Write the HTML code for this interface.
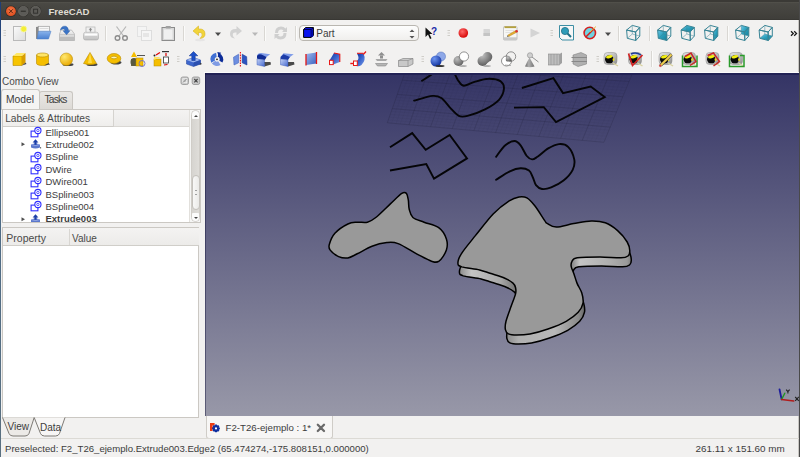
<!DOCTYPE html>
<html><head><meta charset="utf-8">
<style>
*{margin:0;padding:0;box-sizing:border-box}
html,body{width:800px;height:457px;overflow:hidden;background:#f2f1f0;font-family:"Liberation Sans",sans-serif;color:#3c3c3c}
.a{position:absolute}
.t{position:absolute;white-space:nowrap;font-size:10px;line-height:12px}
#title{left:0;top:0;width:800px;height:20px;background:linear-gradient(#3b3a36 0,#3b3a36 2px,#57564f 2px,#4a4944 3px,#3f3e3a 19px,#33322e 20px)}
.wbtn{position:absolute;top:6px;width:11px;height:11px;border-radius:50%}
#view{left:205px;top:73px;width:594px;height:343px;background:linear-gradient(#343465,#9898a8);overflow:hidden}
.ico{position:absolute}
</style></head><body>
<div class="a" id="title">
  <svg class="a" style="left:0;top:0" width="48" height="20">
  <circle cx="10.9" cy="11.2" r="5.6" fill="#2e2d2a"/>
  <circle cx="10.9" cy="11.2" r="4.9" fill="url(#gclose)"/>
  <path d="M9,9.3 L12.8,13.1 M12.8,9.3 L9,13.1" stroke="#5a2410" stroke-width="1"/>
  <circle cx="23.3" cy="11.2" r="5.6" fill="#2e2d2a"/>
  <circle cx="23.3" cy="11.2" r="4.9" fill="#5c5b57" stroke="#6d6c67" stroke-width="0.6"/>
  <rect x="20.8" y="10.6" width="5" height="1.3" fill="#33322f"/>
  <circle cx="35.6" cy="11.2" r="5.6" fill="#2e2d2a"/>
  <circle cx="35.6" cy="11.2" r="4.9" fill="#5c5b57" stroke="#6d6c67" stroke-width="0.6"/>
  <rect x="33.6" y="9.2" width="4" height="4" fill="none" stroke="#33322f" stroke-width="1"/>
  <defs><radialGradient id="gclose" cx="0.5" cy="0.4" r="0.6"><stop offset="0" stop-color="#f77a4a"/><stop offset="1" stop-color="#de4c1c"/></radialGradient></defs>
</svg>
<div class="t" style="left:48.5px;top:5.5px;font-weight:bold;color:#dfdbd2;font-size:9.6px">FreeCAD</div>
</div>
<svg class="a" style="left:0;top:0" width="800" height="72" viewBox="0 0 800 72"><defs>
<linearGradient id="gpage" x1="0" y1="0" x2="1" y2="1"><stop offset="0" stop-color="#fbfbfb"/><stop offset="1" stop-color="#dcdcdc"/></linearGradient>
<radialGradient id="gred" cx="0.4" cy="0.35" r="0.7"><stop offset="0" stop-color="#ff6a6a"/><stop offset="1" stop-color="#d40000"/></radialGradient>
<radialGradient id="gsph" cx="0.35" cy="0.3" r="0.75"><stop offset="0" stop-color="#ffe870"/><stop offset="1" stop-color="#e8a800"/></radialGradient>
<radialGradient id="gbsph" cx="0.35" cy="0.3" r="0.75"><stop offset="0" stop-color="#6d94f0"/><stop offset="1" stop-color="#0e2f9c"/></radialGradient>
<linearGradient id="gblu" x1="0" y1="0" x2="1" y2="1"><stop offset="0" stop-color="#9fb8ee"/><stop offset="1" stop-color="#3a62c0"/></linearGradient>
<linearGradient id="gteal" x1="0" y1="0" x2="1" y2="1"><stop offset="0" stop-color="#6cc8e8"/><stop offset="0.5" stop-color="#2a9fbb"/><stop offset="1" stop-color="#177f98"/></linearGradient>
<linearGradient id="gtray" x1="0" y1="0" x2="0" y2="1"><stop offset="0" stop-color="#f6f6f6"/><stop offset="1" stop-color="#c2c2c2"/></linearGradient>
<linearGradient id="gmeas" x1="0" y1="0" x2="1" y2="1"><stop offset="0" stop-color="#e6e6e6"/><stop offset="0.6" stop-color="#b5b5b5"/><stop offset="1" stop-color="#8a8a8a"/></linearGradient>
<linearGradient id="gfront" x1="0" y1="0" x2="1" y2="1"><stop offset="0" stop-color="#c4d2f4"/><stop offset="1" stop-color="#4468d0"/></linearGradient>
<linearGradient id="gloft" x1="0" y1="0" x2="1" y2="1"><stop offset="0" stop-color="#10309c"/><stop offset="0.5" stop-color="#3a64cc"/><stop offset="1" stop-color="#7a9ce8"/></linearGradient>
<linearGradient id="gopen" x1="0" y1="0" x2="0" y2="1"><stop offset="0" stop-color="#8ab4ec"/><stop offset="1" stop-color="#4a80d0"/></linearGradient>
<linearGradient id="gprint" x1="0" y1="0" x2="0" y2="1"><stop offset="0" stop-color="#f4f4f4"/><stop offset="1" stop-color="#bcbcbc"/></linearGradient>
<radialGradient id="ggry" cx="0.35" cy="0.3" r="0.8"><stop offset="0" stop-color="#bdbdbd"/><stop offset="1" stop-color="#5a5a5a"/></radialGradient>
<linearGradient id="gcone" x1="0" y1="0" x2="1" y2="0"><stop offset="0" stop-color="#6a6a6a"/><stop offset="0.4" stop-color="#b0b0b0"/><stop offset="1" stop-color="#707070"/></linearGradient>
<radialGradient id="ggryU" gradientUnits="userSpaceOnUse" cx="482" cy="55" r="12"><stop offset="0" stop-color="#c4c4c4"/><stop offset="1" stop-color="#555"/></radialGradient>
<linearGradient id="gyel" x1="0" y1="0" x2="0" y2="1"><stop offset="0" stop-color="#ffe566"/><stop offset="1" stop-color="#e8a800"/></linearGradient>
</defs><rect x="3.5" y="30.0" width="2.5" height="1" fill="#cfcdc8"/><rect x="3.5" y="32.5" width="2.5" height="1" fill="#cfcdc8"/><rect x="3.5" y="35.0" width="2.5" height="1" fill="#cfcdc8"/><rect x="13.5" y="26.5" width="12" height="14" fill="url(#gpage)" stroke="#b9b9b9"/><circle cx="23.7" cy="29" r="3" fill="#f4ee35" stroke="#f7f7a0" stroke-width="0.8"/><path d="M36,27 L38.5,26.5 L38.5,38.5 L36,39Z" fill="#8a8a8a"/><rect x="38.5" y="26.3" width="11" height="5.5" fill="#f7f7f7" stroke="#9c9c9c" stroke-width="0.7"/><rect x="39.5" y="28" width="9" height="0.6" fill="#c8c8c8"/><path d="M38.5,31.2 L51,31.2 L48.5,39 L37,39Z" fill="url(#gopen)" stroke="#4a7cc4" stroke-width="0.5"/><path d="M61,30 L71.5,30 L74.5,34 L74.5,40.5 L59.5,40.5 L59.5,34Z" fill="url(#gtray)" stroke="#a5a5a5" stroke-width="0.6"/><rect x="60" y="34" width="14" height="0.8" fill="#c4c4c4"/><rect x="60" y="37" width="14" height="3" fill="#bdbdbd"/><path d="M60.3,30.2 Q61.5,25.3 65.8,26.3 Q68.3,27.2 68.5,30.7 L70,30.7 L66.6,34.8 L63,30.7 L65,30.7 Q64.8,29.2 63.6,28.9 Q62,28.8 60.3,30.2Z" fill="#3b74c6" stroke="#2a5aa0" stroke-width="0.4"/><rect x="86" y="27" width="9" height="5.5" fill="#f0f0f0" stroke="#b4b4b4" stroke-width="0.7"/><path d="M90.5,27.8 L92.3,29.8 L91.2,29.8 L91.2,31.5 L89.8,31.5 L89.8,29.8 L88.7,29.8Z" fill="#8a8a8a"/><rect x="83.5" y="32.3" width="15" height="7.7" rx="2" fill="url(#gprint)" stroke="#a9a9a9" stroke-width="0.6"/><rect x="85" y="34" width="12" height="1.5" fill="#fdfdfd"/><rect x="84.5" y="36.5" width="13" height="0.8" fill="#c0c0c0"/><rect x="105" y="26" width="1" height="15" fill="#d9d7d3"/><rect x="106" y="26" width="1" height="15" fill="#fbfbfa"/><g stroke="#8d8d8d" fill="none"><path d="M116.5,26.5 L123.5,36" stroke-width="1.2" stroke="#b5b5b5"/><path d="M126,26.5 L119,36" stroke-width="1.2" stroke="#b5b5b5"/><circle cx="117.5" cy="38" r="2.3" stroke-width="1.4"/><circle cx="125" cy="38" r="2.3" stroke-width="1.4"/></g><rect x="137.5" y="26.5" width="9" height="10" fill="#f4f4f4" stroke="#dedede" stroke-width="0.8"/><rect x="141.5" y="30.5" width="10" height="10" fill="#f6f6f6" stroke="#d8d8d8" stroke-width="0.8"/><rect x="143" y="33" width="6" height="4" fill="#e6e6e6"/><rect x="162" y="27.5" width="12.5" height="13" fill="#d8d8d8" stroke="#8b8b8b" stroke-width="1"/><rect x="164" y="29.5" width="8.5" height="9.5" fill="#f0f0f0"/><rect x="165.5" y="26" width="5.5" height="2.5" rx="1" fill="#a0a0a0"/><rect x="183" y="26" width="1" height="15" fill="#d9d7d3"/><rect x="184" y="26" width="1" height="15" fill="#fbfbfa"/><path d="M193,31 L198.5,26 L198.5,29 Q205,28.5 205,34 Q205,38 200,38.5 Q203,36 202,33.5 Q201,32 198.5,32.5 L198.5,35.5Z" fill="#f2d43a" stroke="#d8b520" stroke-width="0.6"/><ellipse cx="200" cy="40" rx="5" ry="1.2" fill="#ddd" opacity="0.6"/><path d="M215,32.5 L221,32.5 L218,36Z" fill="#4a4a4a"/><path d="M242,31 L236.5,26 L236.5,29 Q230,28.5 230,34 Q230,38 235,38.5 Q232,36 233,33.5 Q234,32 236.5,32.5 L236.5,35.5Z" fill="#d2d2d2"/><path d="M252,32.5 L258,32.5 L255,36Z" fill="#b8b8b8"/><rect x="264" y="26" width="1" height="15" fill="#d9d7d3"/><rect x="265" y="26" width="1" height="15" fill="#fbfbfa"/><path d="M275,33 Q275,26.5 281,26.5 Q284,26.5 285.5,28.5 L287,27 L287,32 L282,32 L283.5,30.5 Q282.5,29.5 281,29.5 Q278,29.5 278,33Z" fill="#cfcfcf"/><path d="M286.5,33 Q286.5,39.5 280.5,39.5 Q277.5,39.5 276,37.5 L274.5,39 L274.5,34 L279.5,34 L278,35.5 Q279,36.5 280.5,36.5 Q283.5,36.5 283.5,33Z" fill="#cfcfcf"/><rect x="295" y="26" width="1" height="15" fill="#d9d7d3"/><rect x="296" y="26" width="1" height="15" fill="#fbfbfa"/><path d="M425.5,27.5 L425.5,37 L428,34.5 L430,39 L431.5,38.3 L429.5,34 L432.5,34Z" fill="#111"/><text x="431" y="35" font-family="Liberation Sans" font-weight="bold" font-size="10" fill="#1a2aa8">?</text><rect x="447.5" y="30.0" width="2.5" height="1" fill="#cfcdc8"/><rect x="447.5" y="32.5" width="2.5" height="1" fill="#cfcdc8"/><rect x="447.5" y="35.0" width="2.5" height="1" fill="#cfcdc8"/><circle cx="463.3" cy="33" r="4.8" fill="url(#gred)"/><rect x="483.5" y="29" width="6.5" height="7" rx="0.5" fill="#d6d6d6"/><rect x="483.5" y="33" width="6.5" height="3" fill="#c4c4c4"/><rect x="503.5" y="26.5" width="13.5" height="13.5" rx="1" fill="#f7f7f5" stroke="#b0b0b0" stroke-width="0.7"/><rect x="504.5" y="26.3" width="11.5" height="1.8" fill="#b4a03c"/><rect x="503.5" y="37.3" width="13.5" height="2.7" fill="#c8c8c8"/><path d="M505.5,30.5 L514,30.5 M505.5,32.5 L512,32.5" stroke="#d8d8d8" stroke-width="0.7"/><path d="M507.6,35.2 L515.5,30.6 L516.8,32.2 L508.8,36.6Z" fill="#e4ae30" stroke="#a8781c" stroke-width="0.4"/><path d="M507.6,35.2 L507,36.9 L508.8,36.6Z" fill="#555"/><circle cx="516.6" cy="31.2" r="1.3" fill="#d83030"/><path d="M530.5,28.5 L540,33 L530.5,37.5Z" fill="#d4d4d4"/><rect x="550.5" y="30.0" width="2.5" height="1" fill="#cfcdc8"/><rect x="550.5" y="32.5" width="2.5" height="1" fill="#cfcdc8"/><rect x="550.5" y="35.0" width="2.5" height="1" fill="#cfcdc8"/><path d="M559.5,25.5 L573.5,25.5 L573.5,40 L562,40 L559.5,37.5Z" fill="#f7f7f7" stroke="#3d8ea3" stroke-width="1"/><circle cx="565" cy="31" r="3.6" fill="#2f9cb8" stroke="#1e6f86" stroke-width="0.8"/><path d="M567.5,33.5 L571,37" stroke="#1e6f86" stroke-width="2"/><circle cx="589.8" cy="33" r="5.7" fill="#6fd3e0" stroke="#d42020" stroke-width="1.6"/><path d="M585.8,37 L593.8,29" stroke="#d42020" stroke-width="1.6"/><path d="M590,32 L596,26.5" stroke="#e8c040" stroke-width="1"/><path d="M605,32.5 L611,32.5 L608,36Z" fill="#4a4a4a"/><rect x="618" y="26" width="1" height="15" fill="#d9d7d3"/><rect x="619" y="26" width="1" height="15" fill="#fbfbfa"/><g transform="translate(626,25)"><path d="M0.6,5.0 L9.6,7.0 L9.8,15.5 L1.3,13.3Z M0.6,5.0 L6.3,0.4 L13.8,2.4 L9.6,7.0Z M9.6,7.0 L13.8,2.4 L13.8,11.1 L9.8,15.5Z" fill="none" stroke="#3a8596" stroke-width="1"/><path d="M6.3,0.4 L6.3,9.0 M6.3,9.0 L13.8,11.1 M6.3,9.0 L1.3,13.3" fill="none" stroke="#3a8596" stroke-width="0.6" opacity="0.8"/></g><rect x="649" y="26" width="1" height="15" fill="#d9d7d3"/><rect x="650" y="26" width="1" height="15" fill="#fbfbfa"/><g transform="translate(657,25)"><path d="M0.6,5.0 L9.6,7.0 L9.8,15.5 L1.3,13.3Z" fill="url(#gteal)"/><path d="M0.6,5.0 L9.6,7.0 L9.8,15.5 L1.3,13.3Z M0.6,5.0 L6.3,0.4 L13.8,2.4 L9.6,7.0Z M9.6,7.0 L13.8,2.4 L13.8,11.1 L9.8,15.5Z" fill="none" stroke="#3a8596" stroke-width="1"/><path d="M6.3,0.4 L6.3,9.0 M6.3,9.0 L13.8,11.1 M6.3,9.0 L1.3,13.3" fill="none" stroke="#3a8596" stroke-width="0.6" opacity="0.8"/></g><g transform="translate(680.5,25)"><path d="M0.6,5.0 L6.3,0.4 L13.8,2.4 L9.6,7.0Z" fill="url(#gteal)"/><path d="M0.6,5.0 L9.6,7.0 L9.8,15.5 L1.3,13.3Z M0.6,5.0 L6.3,0.4 L13.8,2.4 L9.6,7.0Z M9.6,7.0 L13.8,2.4 L13.8,11.1 L9.8,15.5Z" fill="none" stroke="#3a8596" stroke-width="1"/><path d="M6.3,0.4 L6.3,9.0 M6.3,9.0 L13.8,11.1 M6.3,9.0 L1.3,13.3" fill="none" stroke="#3a8596" stroke-width="0.6" opacity="0.8"/></g><g transform="translate(704,25)"><path d="M9.6,7.0 L13.8,2.4 L13.8,11.1 L9.8,15.5Z" fill="url(#gteal)"/><path d="M0.6,5.0 L9.6,7.0 L9.8,15.5 L1.3,13.3Z M0.6,5.0 L6.3,0.4 L13.8,2.4 L9.6,7.0Z M9.6,7.0 L13.8,2.4 L13.8,11.1 L9.8,15.5Z" fill="none" stroke="#3a8596" stroke-width="1"/><path d="M6.3,0.4 L6.3,9.0 M6.3,9.0 L13.8,11.1 M6.3,9.0 L1.3,13.3" fill="none" stroke="#3a8596" stroke-width="0.6" opacity="0.8"/></g><rect x="727" y="26" width="1" height="15" fill="#d9d7d3"/><rect x="728" y="26" width="1" height="15" fill="#fbfbfa"/><g transform="translate(735,25)"><path d="M6.3,0.4 L13.8,2.4 L13.8,11.1 L6.3,9.0Z" fill="url(#gteal)"/><path d="M0.6,5.0 L9.6,7.0 L9.8,15.5 L1.3,13.3Z M0.6,5.0 L6.3,0.4 L13.8,2.4 L9.6,7.0Z M9.6,7.0 L13.8,2.4 L13.8,11.1 L9.8,15.5Z" fill="none" stroke="#3a8596" stroke-width="1"/><path d="M6.3,0.4 L6.3,9.0 M6.3,9.0 L13.8,11.1 M6.3,9.0 L1.3,13.3" fill="none" stroke="#3a8596" stroke-width="0.6" opacity="0.8"/></g><g transform="translate(758.5,25)"><path d="M1.3,13.3 L9.8,15.5 L13.8,11.1 L6.3,9.0Z" fill="url(#gteal)"/><path d="M0.6,5.0 L9.6,7.0 L9.8,15.5 L1.3,13.3Z M0.6,5.0 L6.3,0.4 L13.8,2.4 L9.6,7.0Z M9.6,7.0 L13.8,2.4 L13.8,11.1 L9.8,15.5Z" fill="none" stroke="#3a8596" stroke-width="1"/><path d="M6.3,0.4 L6.3,9.0 M6.3,9.0 L13.8,11.1 M6.3,9.0 L1.3,13.3" fill="none" stroke="#3a8596" stroke-width="0.6" opacity="0.8"/></g><path d="M791,31.3 L793.3,33.5 L791,35.7 M794.2,31.3 L796.5,33.5 L794.2,35.7" stroke="#1a1a1a" stroke-width="1.3" fill="none"/><rect x="3.5" y="56.0" width="2.5" height="1" fill="#cfcdc8"/><rect x="3.5" y="58.5" width="2.5" height="1" fill="#cfcdc8"/><rect x="3.5" y="61.0" width="2.5" height="1" fill="#cfcdc8"/><path d="M13,56 L22,56 L22,65.5 L13,65.5Z" fill="#f7c400" stroke="#b58a00" stroke-width="0.6"/><path d="M13,56 L16.5,53 L25.5,53 L22,56Z" fill="#ffe866"/><path d="M22,56 L25.5,53 L25.5,62.5 L22,65.5Z" fill="#d99e00"/><path d="M22,65.5 L26.5,64 L25.5,62.5Z" fill="#444"/><path d="M36.5,55 L36.5,63.5 A6,2 0 0 0 48.5,63.5 L48.5,55Z" fill="#f5be00" stroke="#b58a00" stroke-width="0.6"/><ellipse cx="42.5" cy="55" rx="6" ry="2" fill="#ffe566" stroke="#b58a00" stroke-width="0.6"/><path d="M44,65.5 L50,64.5 L48.5,63Z" fill="#444"/><ellipse cx="68" cy="64.5" rx="5.5" ry="1.5" fill="#444"/><circle cx="66.3" cy="59.3" r="6.3" fill="url(#gsph)" stroke="#b58a00" stroke-width="0.5"/><ellipse cx="92" cy="64.5" rx="5.5" ry="1.5" fill="#444"/><path d="M90,52.5 L96.5,63.5 Q90,66 83.5,63.5Z" fill="#f5be00" stroke="#b58a00" stroke-width="0.6"/><path d="M90,52.5 L92,63 L88,63Z" fill="#ffe566" opacity="0.7"/><ellipse cx="116" cy="62.5" rx="5.5" ry="2" fill="#444"/><ellipse cx="114" cy="58.5" rx="6.8" ry="5" fill="#f5be00" stroke="#b58a00" stroke-width="0.6"/><ellipse cx="114" cy="57.5" rx="3" ry="1.3" fill="#fff3b0" stroke="#9a7600" stroke-width="0.5"/><path d="M131,59 L131,66 L137,66 L137,59Z" fill="#6f6a4a"/><ellipse cx="134" cy="62" rx="3.5" ry="4" fill="#5a5a40"/><path d="M134,51.5 L137,57 L131,57Z" fill="#f5be00"/><rect x="136" y="58" width="7" height="8" fill="#f5be00" stroke="#b58a00" stroke-width="0.5"/><rect x="137" y="55" width="8" height="1" fill="#555"/><circle cx="142" cy="63.5" r="3" fill="none" stroke="#7070c8" stroke-width="0.9"/><rect x="154" y="59" width="7" height="7" fill="#f5be00" stroke="#b58a00" stroke-width="0.5"/><path d="M154,60 L161,57 L154,57" fill="#ffe566"/><rect x="163.5" y="57" width="5" height="6" fill="#fff" stroke="#333" stroke-width="0.8"/><rect x="162" y="51" width="7" height="1.2" fill="#333"/><path d="M156,55 L160,52.5" stroke="#d00" stroke-width="1.2"/><circle cx="154.5" cy="55.5" r="1" fill="#222"/><path d="M166,53 L166,56" stroke="#d00" stroke-width="1.2"/><path d="M164,65 L167.5,64.5" stroke="#d00" stroke-width="1.2"/><rect x="177.0" y="56.0" width="2.5" height="1" fill="#cfcdc8"/><rect x="177.0" y="58.5" width="2.5" height="1" fill="#cfcdc8"/><rect x="177.0" y="61.0" width="2.5" height="1" fill="#cfcdc8"/><path d="M186.5,60 L193.5,57.5 L200.5,60 L200.5,64 L193.5,66.5 L186.5,64Z" fill="#3d66cc" stroke="#1e3e9a" stroke-width="0.5"/><path d="M186.5,60 L193.5,57.5 L200.5,60 L193.5,62.5Z" fill="#9ab4ee"/><path d="M193.5,62.5 L200.5,60 L200.5,64 L193.5,66.5Z" fill="#2c50b0"/><path d="M193.5,51.5 L197.8,55.8 L195.2,55.8 L195.2,60.5 L191.8,60.5 L191.8,55.8 L189.2,55.8Z" fill="#1c50c8" stroke="#0e3090" stroke-width="0.5"/><path d="M199.5,65 L202,64 L200.5,62.8Z" fill="#333"/><path d="M213.10,61.55 A4.50,4.50 0 0 1 216.37,54.84" stroke="#4070d4" stroke-width="4.4" fill="none"/><path d="M219.38,63.12 A4.50,4.50 0 0 1 213.55,62.19" stroke="#7f9be4" stroke-width="4.4" fill="none"/><path d="M218.16,54.95 A4.50,4.50 0 0 1 220.90,61.55" stroke="#0c2c98" stroke-width="3.6" fill="none"/><path d="M217.3,52.099999999999994 L221.2,52.8 L218.5,56.099999999999994Z" fill="#0c2c98"/><circle cx="217" cy="59.3" r="0.9" fill="#222"/><path d="M233.5,57.2 L238.6,54.2 L238.6,62.8 L234,65Z" fill="#6d8ee0" stroke="#3458b8" stroke-width="0.5"/><path d="M242.2,54.2 L246.7,56.7 L247,65 L242.2,62.8Z" fill="#2c55c0" stroke="#0f2f90" stroke-width="0.5"/><path d="M240.4,52 L240.4,66.5" stroke="#f01010" stroke-width="1.1" stroke-dasharray="1.6,1"/><path d="M264,62 L270.5,62 L271,64.5 L264.5,66.5Z" fill="#4a4a4a"/><path d="M257,56 Q257.5,53.2 261,53 L270.2,54.3 L266.5,57 Z" fill="#7f9ce8"/><path d="M257,56 Q257.8,53.8 261.5,54.5 L266.5,57 Q265.5,59.3 264.5,60 L257,58.8Z" fill="#102c94"/><path d="M257,58.8 L264.5,60 L264.5,66.5 L257,64.8Z" fill="url(#gfront)" stroke="#2c4cb0" stroke-width="0.4"/><path d="M287.5,62 L294,62 L294.5,64.5 L288,66.5Z" fill="#4a4a4a"/><path d="M280.5,57 L283.5,53.3 L293.7,54.3 L290,57Z" fill="#7f9ce8"/><path d="M280.5,57 L283.5,54.3 L290,57 L288,60 L280.5,59Z" fill="#1c3ca8"/><path d="M280.5,59 L288,60 L288,66.5 L280.5,64.8Z" fill="url(#gfront)" stroke="#2c4cb0" stroke-width="0.4"/><path d="M306,54 L316.5,52.5 L316.5,63.5 L306,65Z" fill="url(#gblu)"/><path d="M306,54 L306,65.5 M316.5,52 L316.5,64" stroke="#e01515" stroke-width="1.3"/><path d="M329.5,60.5 L334,53 L339.8,54.3 L339.8,62 L333.2,64.5Z" fill="url(#gloft)"/><path d="M334,53 L339.8,54.3 L339.8,62" stroke="#e81818" stroke-width="1.1" fill="none"/><rect x="329.5" y="60.3" width="3.7" height="4.3" fill="#fff" stroke="#e81818" stroke-width="1"/><path d="M357,53.5 L363.5,53.5 Q366.5,60 361.5,65 Q359,66.8 356.5,66 L357,61 Q360,58.5 357,53.5Z" fill="url(#gloft)"/><path d="M357,53.3 L363.5,53.3" stroke="#e81818" stroke-width="1.1"/><path d="M363.3,54.5 L366,51.5" stroke="#e81818" stroke-width="1.2"/><rect x="353.5" y="61" width="3.8" height="4.5" fill="#fff" stroke="#e81818" stroke-width="1"/><path d="M350.3,63.5 L353.5,63.5" stroke="#e81818" stroke-width="1.4"/><path d="M381.5,52 L385,55.5 L378,55.5Z" fill="#8f8f8f"/><rect x="380" y="55.5" width="3" height="3" fill="#8f8f8f"/><path d="M375.5,59 L387.5,59 L386,61 L377,61Z" fill="#a8a8a8"/><path d="M375.5,63.5 L387.5,63.5 L385.5,66 L377.5,66Z" fill="#b5b5b5" stroke="#777" stroke-width="0.5"/><path d="M398.5,60.5 L403,58.5 L413,58.5 L413,64 L408,66.5 L398.5,66.5Z" fill="#c8c8c8" stroke="#7a7a7a" stroke-width="0.6"/><path d="M398.5,60.5 L408,60.5 L413,58.5 M408,60.5 L408,66.5" fill="none" stroke="#888" stroke-width="0.6"/><rect x="421.5" y="56.0" width="2.5" height="1" fill="#cfcdc8"/><rect x="421.5" y="58.5" width="2.5" height="1" fill="#cfcdc8"/><rect x="421.5" y="61.0" width="2.5" height="1" fill="#cfcdc8"/><circle cx="441" cy="56.5" r="4.5" fill="#8ea8e8" stroke="#5a78c0" stroke-width="0.6"/><circle cx="436" cy="61" r="5.5" fill="url(#gbsph)"/><ellipse cx="440" cy="66" rx="4.5" ry="1" fill="#333"/><ellipse cx="463" cy="66" rx="4" ry="0.8" fill="#999"/><circle cx="458.5" cy="61" r="5" fill="url(#ggry)"/><circle cx="464" cy="56.5" r="4.6" fill="#fff" stroke="#666" stroke-width="0.7"/><ellipse cx="487" cy="66" rx="4" ry="0.8" fill="#999"/><g fill="url(#ggryU)"><circle cx="482.5" cy="61" r="5"/><circle cx="487.5" cy="56.8" r="4.8"/><path d="M479,58.5 L485,53.5 L491,60 L485,65Z"/></g><circle cx="506.5" cy="61" r="5" fill="#fff" stroke="#666" stroke-width="0.7"/><circle cx="511" cy="56.5" r="4.7" fill="none" stroke="#666" stroke-width="0.7"/><path d="M506.5,56 Q510,55.5 511.5,61.2 Q508,62 506,61 Q505.5,58 506.5,56Z" fill="url(#ggry)"/><path d="M505,65 L511,65.5" stroke="#888" stroke-width="0.6"/><path d="M529.5,57.5 Q532,62 534.5,66.5 Q530,67.8 525,66.5 Q527,62 529.5,57.5Z" fill="url(#gcone)"/><circle cx="530" cy="55.3" r="2.6" fill="#d0d0d0" stroke="#8a8a8a" stroke-width="0.6"/><path d="M532,57 L538.5,62" stroke="#777" stroke-width="0.8"/><rect x="548.5" y="54" width="11" height="11" fill="#bdbdbd" stroke="#8a8a8a" stroke-width="0.6"/><path d="M551,54 L551,65 M554,54 L554,65 M557,54 L557,65" stroke="#9a9a9a" stroke-width="0.7"/><path d="M559.5,54 L562,52.5 L562,63 L559.5,65Z" fill="#a0a0a0"/><path d="M573,55 L581,52.5 L586.5,55 L586.5,64 L578,66.5 L573,64Z" fill="#b0b0b0" stroke="#777" stroke-width="0.5"/><path d="M571.5,57.5 L587,57.5 M571.5,61.5 L587,61.5" stroke="#888" stroke-width="1.2"/><rect x="596.5" y="56.0" width="2.5" height="1" fill="#cfcdc8"/><rect x="596.5" y="58.5" width="2.5" height="1" fill="#cfcdc8"/><rect x="596.5" y="61.0" width="2.5" height="1" fill="#cfcdc8"/><g transform="translate(603.5,52.5)"><rect x="0.5" y="0" width="13" height="12" rx="3.5" fill="url(#gmeas)" stroke="#8a8a8a" stroke-width="0.5"/><ellipse cx="5.8" cy="6.8" rx="4.3" ry="4" fill="#0a0a0a"/><ellipse cx="5.8" cy="4.3" rx="3.3" ry="1.6" fill="#f2ee10" transform="rotate(-12 5.8 4.3)"/><ellipse cx="10" cy="7" rx="0.9" ry="1.6" fill="#e8e020"/><path d="M9.5,10.5 L14.5,13.5" stroke="#d9d2a0" stroke-width="1.4"/></g><g transform="translate(628,52.5)"><rect x="0.5" y="0" width="13" height="12" rx="3.5" fill="url(#gmeas)" stroke="#8a8a8a" stroke-width="0.5"/><ellipse cx="5.8" cy="6.8" rx="4.3" ry="4" fill="#0a0a0a"/><ellipse cx="5.8" cy="4.3" rx="3.3" ry="1.6" fill="#f2ee10" transform="rotate(-12 5.8 4.3)"/><ellipse cx="10" cy="7" rx="0.9" ry="1.6" fill="#e8e020"/><path d="M9.5,10.5 L14.5,13.5" stroke="#d9d2a0" stroke-width="1.4"/><path d="M3,1.5 Q8,-1 13,2.5" stroke="#1a3a9a" stroke-width="1.4" fill="none"/><path d="M0.5,1 L4.5,13 L14.5,2.5" stroke="#d42020" stroke-width="1.6" fill="none"/></g><rect x="651" y="51" width="1" height="16" fill="#d9d7d3"/><rect x="652" y="51" width="1" height="16" fill="#fbfbfa"/><g transform="translate(658.5,52.5)"><rect x="0.5" y="0" width="13" height="12" rx="3.5" fill="url(#gmeas)" stroke="#8a8a8a" stroke-width="0.5"/><ellipse cx="5.8" cy="6.8" rx="4.3" ry="4" fill="#0a0a0a"/><ellipse cx="5.8" cy="4.3" rx="3.3" ry="1.6" fill="#f2ee10" transform="rotate(-12 5.8 4.3)"/><ellipse cx="10" cy="7" rx="0.9" ry="1.6" fill="#e8e020"/><path d="M9.5,10.5 L14.5,13.5" stroke="#d9d2a0" stroke-width="1.4"/><path d="M2,13 L13,2" stroke="#3a3020" stroke-width="3"/><path d="M2,13 L13,2" stroke="#f0d050" stroke-width="2"/><path d="M1,14 L2.5,12.5" stroke="#d04040" stroke-width="2"/></g><g transform="translate(682,52.5)"><rect x="0.5" y="0" width="13" height="12" rx="3.5" fill="url(#gmeas)" stroke="#8a8a8a" stroke-width="0.5"/><ellipse cx="5.8" cy="6.8" rx="4.3" ry="4" fill="#0a0a0a"/><ellipse cx="5.8" cy="4.3" rx="3.3" ry="1.6" fill="#f2ee10" transform="rotate(-12 5.8 4.3)"/><ellipse cx="10" cy="7" rx="0.9" ry="1.6" fill="#e8e020"/><path d="M9.5,10.5 L14.5,13.5" stroke="#d9d2a0" stroke-width="1.4"/><path d="M0.5,3 L0.5,14 L15,14 L15,3" stroke="#2a9a2a" stroke-width="1.5" fill="none"/><path d="M3,4 L9,0.5 L14,9 L8,13" stroke="#c82828" stroke-width="1.5" fill="none"/></g><g transform="translate(705.5,52.5)"><rect x="0.5" y="0" width="13" height="12" rx="3.5" fill="url(#gmeas)" stroke="#8a8a8a" stroke-width="0.5"/><ellipse cx="5.8" cy="6.8" rx="4.3" ry="4" fill="#0a0a0a"/><ellipse cx="5.8" cy="4.3" rx="3.3" ry="1.6" fill="#f2ee10" transform="rotate(-12 5.8 4.3)"/><ellipse cx="10" cy="7" rx="0.9" ry="1.6" fill="#e8e020"/><path d="M9.5,10.5 L14.5,13.5" stroke="#d9d2a0" stroke-width="1.4"/><path d="M2,3 L8,0.5 L14,9 L8,13.5" stroke="#c82828" stroke-width="1.5" fill="none"/></g><g transform="translate(729,52.5)"><rect x="0.5" y="0" width="13" height="12" rx="3.5" fill="url(#gmeas)" stroke="#8a8a8a" stroke-width="0.5"/><ellipse cx="5.8" cy="6.8" rx="4.3" ry="4" fill="#0a0a0a"/><ellipse cx="5.8" cy="4.3" rx="3.3" ry="1.6" fill="#f2ee10" transform="rotate(-12 5.8 4.3)"/><ellipse cx="10" cy="7" rx="0.9" ry="1.6" fill="#e8e020"/><path d="M9.5,10.5 L14.5,13.5" stroke="#d9d2a0" stroke-width="1.4"/><path d="M0.5,3 L0.5,14 L15,14 L15,3 L11,3" stroke="#2a9a2a" stroke-width="1.5" fill="none"/></g></svg>
<!-- combo box -->
<div class="a" style="left:299px;top:25px;width:120px;height:16px;border:1px solid #b9b6b0;border-radius:4px;background:linear-gradient(#fdfdfd,#f0efed)"></div>
<svg class="a" style="left:303px;top:27px" width="11" height="11"><path d="M0.6,2.5 L2.5,0.6 L10.4,0.6 L10.4,8.2 L8.2,10.4 L0.6,10.4Z" fill="#0a14f0" stroke="#000" stroke-width="1"/><path d="M0.6,2.5 L8.2,2.5 L10.4,0.6 M8.2,2.5 L8.2,10.4" fill="none" stroke="#000030" stroke-width="0.8"/><rect x="8.6" y="2.8" width="1.5" height="7" fill="#0008b0"/></svg>
<div class="t" style="left:316.3px;top:28.2px;font-size:10px;color:#3c3c3c">Part</div>
<svg class="a" style="left:409px;top:29px" width="6" height="10"><path d="M0.5,3 L3,0.5 L5.5,3Z M0.5,7 L3,9.5 L5.5,7Z" fill="#555"/></svg>
<div class="a" style="left:0;top:2px;width:1px;height:455px;background:linear-gradient(#1e3e78,#4a6a88 30%,#5a7080)"></div>
<div class="a" style="left:799px;top:0;width:1px;height:457px;background:#4a4a4a"></div><div class="a" style="left:798px;top:20px;width:1px;height:437px;background:#c8c6c2"></div>


<!-- left panel -->
<div class="t" style="left:2px;top:76px;font-size:10px;color:#4c4c4c">Combo View</div>
<svg class="a" style="left:180px;top:76px" width="21" height="10"><rect x="1" y="1" width="7.5" height="7.5" rx="1.8" fill="#c9c9c9" stroke="#9a9a9a" stroke-width="0.9"/><rect x="2.8" y="2.8" width="3.9" height="3.9" fill="none" stroke="#f2f2f2" stroke-width="0.8"/><path d="M3,6.5 L6.5,3" stroke="#707070" stroke-width="0.8"/><rect x="12.2" y="1" width="7.5" height="7.5" rx="1.8" fill="#c9c9c9" stroke="#9a9a9a" stroke-width="0.9"/><path d="M14.3,3 L17.6,6.4 M17.6,3 L14.3,6.4" stroke="#444" stroke-width="1.1"/></svg>

<!-- tabs -->
<div class="a" style="left:39px;top:91px;width:34px;height:19px;border:1px solid #c9c6c1;border-bottom:none;border-radius:3px 3px 0 0;background:linear-gradient(#eae8e5,#dcd9d5)"></div>
<div class="a" style="left:1px;top:89px;width:39px;height:21px;border:1px solid #c9c6c1;border-bottom:none;border-radius:3px 3px 0 0;background:#f5f4f3"></div>
<div class="t" style="left:6px;top:93.5px;font-size:10.3px;color:#3c3c3c">Model</div>
<div class="t" style="left:44.5px;top:93.5px;font-size:10.2px;letter-spacing:-0.8px;color:#3c3c3c">Tasks</div>
<!-- tree frame -->
<div class="a" style="left:2px;top:109px;width:199px;height:114px;border:1px solid #cbc8c3;background:#fff;overflow:hidden">
  <div class="a" style="left:0;top:0;width:186px;height:17px;background:linear-gradient(#f4f3f2,#ecebe9);border-bottom:1px solid #dad8d4"></div>
  <div class="a" style="left:0;top:0;width:111px;height:17px;background:linear-gradient(#f8f7f6,#efeeec);border-right:1px solid #d5d3cf;border-bottom:1px solid #cfcdc9"></div>
  <div class="t" style="left:2.2px;top:3.4px;font-size:10.2px;color:#4a4a4a">Labels &amp; Attributes</div>
  <svg class="a" style="left:27px;top:16.0px" width="12" height="12"><rect x="1.1" y="5.1" width="6.8" height="5.7" fill="#fff" stroke="#3030ff" stroke-width="1.1"/><circle cx="7.9" cy="4.5" r="3.1" fill="#fff" stroke="#3030ff" stroke-width="1.1"/><circle cx="7.9" cy="4.5" r="1.2" fill="none" stroke="#3030ff" stroke-width="0.8"/></svg><div class="t" style="left:42.5px;top:16.5px;font-size:9.5px;color:#3c3c3c">Ellipse001</div><svg class="a" style="left:18px;top:32.4px" width="5" height="5"><path d="M0.5,0.3 L4,2.2 L0.5,4.2Z" fill="#505050"/></svg><svg class="a" style="left:27px;top:28.4px" width="12" height="12"><path d="M1,6.5 Q5.5,4.5 10,6.5 L10,9.5 Q5.5,11.5 1,9.5Z" fill="#5b78cc"/><path d="M1,6.5 Q5.5,8.5 10,6.5" fill="none" stroke="#a8b8ec" stroke-width="0.8"/><path d="M10,9 L11.5,10 L10,10.5Z" fill="#333"/><path d="M5.5,1.3 L8.4,4.4 L6.6,4.4 L6.6,6.8 L4.4,6.8 L4.4,4.4 L2.6,4.4Z" fill="#1c3fa8"/></svg><div class="t" style="left:42.5px;top:28.9px;font-size:9.5px;color:#3c3c3c">Extrude002</div><svg class="a" style="left:27px;top:40.8px" width="12" height="12"><rect x="1.1" y="5.1" width="6.8" height="5.7" fill="#fff" stroke="#3030ff" stroke-width="1.1"/><circle cx="7.9" cy="4.5" r="3.1" fill="#fff" stroke="#3030ff" stroke-width="1.1"/><circle cx="7.9" cy="4.5" r="1.2" fill="none" stroke="#3030ff" stroke-width="0.8"/></svg><div class="t" style="left:42.5px;top:41.3px;font-size:9.5px;color:#3c3c3c">BSpline</div><svg class="a" style="left:27px;top:53.2px" width="12" height="12"><rect x="1.1" y="5.1" width="6.8" height="5.7" fill="#fff" stroke="#3030ff" stroke-width="1.1"/><circle cx="7.9" cy="4.5" r="3.1" fill="#fff" stroke="#3030ff" stroke-width="1.1"/><circle cx="7.9" cy="4.5" r="1.2" fill="none" stroke="#3030ff" stroke-width="0.8"/></svg><div class="t" style="left:42.5px;top:53.7px;font-size:9.5px;color:#3c3c3c">DWire</div><svg class="a" style="left:27px;top:65.6px" width="12" height="12"><rect x="1.1" y="5.1" width="6.8" height="5.7" fill="#fff" stroke="#3030ff" stroke-width="1.1"/><circle cx="7.9" cy="4.5" r="3.1" fill="#fff" stroke="#3030ff" stroke-width="1.1"/><circle cx="7.9" cy="4.5" r="1.2" fill="none" stroke="#3030ff" stroke-width="0.8"/></svg><div class="t" style="left:42.5px;top:66.1px;font-size:9.5px;color:#3c3c3c">DWire001</div><svg class="a" style="left:27px;top:78.0px" width="12" height="12"><rect x="1.1" y="5.1" width="6.8" height="5.7" fill="#fff" stroke="#3030ff" stroke-width="1.1"/><circle cx="7.9" cy="4.5" r="3.1" fill="#fff" stroke="#3030ff" stroke-width="1.1"/><circle cx="7.9" cy="4.5" r="1.2" fill="none" stroke="#3030ff" stroke-width="0.8"/></svg><div class="t" style="left:42.5px;top:78.5px;font-size:9.5px;color:#3c3c3c">BSpline003</div><svg class="a" style="left:27px;top:90.4px" width="12" height="12"><rect x="1.1" y="5.1" width="6.8" height="5.7" fill="#fff" stroke="#3030ff" stroke-width="1.1"/><circle cx="7.9" cy="4.5" r="3.1" fill="#fff" stroke="#3030ff" stroke-width="1.1"/><circle cx="7.9" cy="4.5" r="1.2" fill="none" stroke="#3030ff" stroke-width="0.8"/></svg><div class="t" style="left:42.5px;top:90.9px;font-size:9.5px;color:#3c3c3c">BSpline004</div><svg class="a" style="left:18px;top:106.8px" width="5" height="5"><path d="M0.5,0.3 L4,2.2 L0.5,4.2Z" fill="#505050"/></svg><svg class="a" style="left:27px;top:102.8px" width="12" height="12"><path d="M1,6.5 Q5.5,4.5 10,6.5 L10,9.5 Q5.5,11.5 1,9.5Z" fill="#5b78cc"/><path d="M1,6.5 Q5.5,8.5 10,6.5" fill="none" stroke="#a8b8ec" stroke-width="0.8"/><path d="M10,9 L11.5,10 L10,10.5Z" fill="#333"/><path d="M5.5,1.3 L8.4,4.4 L6.6,4.4 L6.6,6.8 L4.4,6.8 L4.4,4.4 L2.6,4.4Z" fill="#1c3fa8"/></svg><div class="t" style="left:42.5px;top:103.3px;font-size:9.5px;font-weight:bold;color:#3c3c3c">Extrude003</div>
  <!-- scrollbar -->
  <div class="a" style="left:186px;top:0;width:11px;height:113px;background:#f6f6f5;border-left:1px solid #e2e0dc"></div>
  <div class="a" style="left:188px;top:0;width:9px;height:112px;border:1px solid #d0cdc8;border-radius:4.5px;background:linear-gradient(90deg,#d6d4d0,#dfddd9)"></div>
  <div class="a" style="left:189px;top:1px;width:7px;height:8px;border-radius:3.5px 3.5px 1px 1px;background:#fcfcfc"></div>
  <div class="a" style="left:190.5px;top:4.5px;width:0;height:0;border-left:2px solid transparent;border-right:2px solid transparent;border-bottom:2px solid #444"></div>
  <div class="a" style="left:188.5px;top:64.5px;width:8.5px;height:35px;border:1px solid #c4c1bc;border-radius:4px;background:linear-gradient(90deg,#f8f8f7,#ebeae8)"></div>
  <div class="a" style="left:191.5px;top:80px;width:2.5px;height:5px;border-top:1px solid #a0a0a0;border-bottom:1px solid #a0a0a0"></div>
  <div class="a" style="left:189px;top:103px;width:7px;height:8px;border-radius:1px 1px 3.5px 3.5px;background:#fcfcfc"></div>
  <div class="a" style="left:190.5px;top:106.5px;width:0;height:0;border-left:2px solid transparent;border-right:2px solid transparent;border-top:2px solid #444"></div>
</div>
<!-- property frame -->
<div class="a" style="left:2px;top:227px;width:197px;height:191px;border:1px solid #cbc8c3;background:#fff">
  <div class="a" style="left:0;top:0;width:196px;height:18px;background:linear-gradient(#f4f3f2,#ecebe9);border-bottom:1px solid #d0cec9"></div>
  <div class="a" style="left:65.5px;top:1px;width:1px;height:16px;background:#d8d6d2"></div>
  <div class="t" style="left:3.3px;top:4.2px;font-size:10.5px;color:#4a4a4a">Property</div>
  <div class="t" style="left:69px;top:4.5px;font-size:10px;color:#4a4a4a">Value</div>
</div>
<svg class="a" style="left:0;top:417px" width="80" height="23">
  <path d="M2.5,0.5 L9,16.5 Q10,19 13,19 L25,19 Q28,19 29,16.5 L34.2,0.5" fill="#eceae7" stroke="#7d7a75" stroke-width="1"/>
  <path d="M34.2,0.5 L40.5,16.5 Q41.5,19 44.5,19 L55.5,19 Q58.5,19 59.5,16.5 L65,0.5" fill="#f7f6f5" stroke="#7d7a75" stroke-width="1"/>
</svg>
<div class="t" style="left:7.5px;top:421px;font-size:10px;color:#3c3c3c">View</div>
<div class="t" style="left:40px;top:422px;font-size:10px;color:#3c3c3c">Data</div>

<div class="a" id="view">
<svg width="594" height="343" viewBox="0 0 594 343" style="position:absolute;left:0;top:0">
<defs>
<linearGradient id="sideA" gradientUnits="userSpaceOnUse" x1="253" y1="0" x2="312" y2="0">
<stop offset="0" stop-color="#8c8c8c"/><stop offset="0.2" stop-color="#c4c4c4"/><stop offset="0.7" stop-color="#a8a8a8"/><stop offset="1" stop-color="#6a6a6a"/>
</linearGradient>
<linearGradient id="sideB" gradientUnits="userSpaceOnUse" x1="300" y1="0" x2="380" y2="0">
<stop offset="0" stop-color="#8a8a8a"/><stop offset="0.15" stop-color="#b0b0b0"/><stop offset="0.6" stop-color="#b8b8b8"/><stop offset="0.9" stop-color="#8a8a8a"/><stop offset="1" stop-color="#5e5e5e"/>
</linearGradient>
<linearGradient id="sideC" gradientUnits="userSpaceOnUse" x1="366" y1="0" x2="428" y2="0">
<stop offset="0" stop-color="#8c8c8c"/><stop offset="0.12" stop-color="#c4c4c4"/><stop offset="0.6" stop-color="#aeaeae"/><stop offset="0.88" stop-color="#9a9a9a"/><stop offset="1" stop-color="#6a6a6a"/>
</linearGradient>
</defs>
<path d="M186.6,50.2 L211.8,-20.9 M191.0,50.6 L216.2,-20.6 M195.3,51.0 L220.7,-20.3 M199.6,51.4 L225.1,-20.0 M208.3,52.1 L234.1,-19.5 M212.6,52.5 L238.5,-19.2 M217.0,52.9 L243.0,-18.9 M221.3,53.3 L247.5,-18.6 M230.0,54.1 L256.4,-18.0 M234.3,54.5 L260.8,-17.7 M238.6,54.9 L265.3,-17.4 M242.9,55.3 L269.8,-17.1 M251.6,56.0 L278.7,-16.6 M255.9,56.4 L283.2,-16.3 M260.3,56.8 L287.6,-16.0 M264.6,57.2 L292.1,-15.7 M273.3,58.0 L301.0,-15.1 M277.6,58.4 L305.5,-14.8 M281.9,58.8 L309.9,-14.5 M286.3,59.2 L314.4,-14.2 M294.9,59.9 L323.3,-13.7 M299.3,60.3 L327.8,-13.4 M303.6,60.7 L332.2,-13.1 M307.9,61.1 L336.7,-12.8 M316.6,61.9 L345.6,-12.2 M320.9,62.3 L350.1,-11.9 M325.3,62.7 L354.5,-11.6 M329.6,63.1 L359.0,-11.3 M338.3,63.8 L367.9,-10.8 M342.6,64.2 L372.4,-10.5 M346.9,64.6 L376.9,-10.2 M351.2,65.0 L381.3,-9.9 M359.9,65.8 L390.2,-9.3 M364.2,66.2 L394.7,-9.0 M368.6,66.6 L399.2,-8.7 M372.9,67.0 L403.6,-8.4 M381.6,67.7 L412.6,-7.9 M385.9,68.1 L417.0,-7.6 M390.2,68.5 L421.5,-7.3 M394.6,68.9 L425.9,-7.0 M183.3,47.0 L400.2,66.3 M184.3,44.1 L401.4,63.2 M185.3,41.3 L402.7,60.2 M186.3,38.4 L403.9,57.1 M188.3,32.8 L406.5,51.1 M189.3,29.9 L407.7,48.0 M190.3,27.1 L409.0,45.0 M191.3,24.2 L410.2,41.9 M193.3,18.6 L412.8,35.9 M194.3,15.7 L414.0,32.8 M195.3,12.9 L415.3,29.8 M196.3,10.0 L416.5,26.7 M198.3,4.4 L419.1,20.7 M199.3,1.5 L420.3,17.6 M200.3,-1.3 L421.6,14.6 M201.3,-4.2 L422.8,11.5 M203.3,-9.8 L425.4,5.5 M204.3,-12.7 L426.6,2.4 M205.3,-15.5 L427.9,-0.6 M206.3,-18.4 L429.1,-3.7 " stroke="#1a1a30" stroke-width="0.5" opacity="0.06" fill="none"/>
<path d="M182.3,49.8 L207.3,-21.2 M204.0,51.8 L229.6,-19.8 M225.6,53.7 L251.9,-18.3 M247.3,55.7 L274.2,-16.9 M268.9,57.6 L296.5,-15.4 M290.6,59.6 L318.9,-13.9 M312.3,61.5 L341.2,-12.5 M333.9,63.5 L363.5,-11.0 M355.6,65.4 L385.8,-9.6 M377.2,67.4 L408.1,-8.1 M398.9,69.3 L430.4,-6.7 M182.3,49.8 L398.9,69.3 M187.3,35.6 L405.2,54.1 M192.3,21.4 L411.5,38.9 M197.3,7.2 L417.8,23.7 M202.3,-7.0 L424.1,8.5 M207.3,-21.2 L430.4,-6.7 " stroke="#1a1a30" stroke-width="0.8" opacity="0.24" fill="none"/>
<g fill="none" stroke="#050508" stroke-width="1.9" stroke-linejoin="round" stroke-linecap="round">
<path d="M209.1,27.6 C212.2,26.8 223.0,23.3 227.5,22.9 C232.0,22.5 233.4,23.1 236.3,25.0 C239.2,26.9 242.1,31.6 245.0,34.6 C247.9,37.6 250.9,41.5 253.8,42.9 C256.7,44.3 258.1,44.0 262.5,42.9 C266.9,41.8 274.8,39.1 280.0,36.4 C285.2,33.7 290.9,30.1 294.0,26.8 C297.1,23.4 298.6,19.3 298.9,16.2 C299.2,13.2 298.3,10.2 295.8,8.4 C293.2,6.7 287.9,5.7 283.5,5.8 C279.1,5.8 273.6,7.7 269.5,8.9 C265.4,10.1 261.6,12.8 259.0,12.8 C256.4,12.7 255.3,10.5 253.8,8.4 C252.2,6.3 250.5,2.4 249.4,0.2 C248.3,-2.1 247.4,-4.1 247.0,-5.0"/>
<path d="M217.0,7.8 C218.9,6.6 225.4,2.3 228.4,0.2 C231.4,-2.0 233.9,-4.1 235.0,-5.0"/>
<polyline stroke-linejoin="miter" stroke-linecap="butt" points="316.9,15.0 348.4,5.2 358.0,20.1 385.7,13.6 399.7,24.1 351.0,49.0 338.8,34.1 309.0,34.6"/>
<polyline stroke-linejoin="miter" stroke-linecap="butt" points="185.0,74.2 207.2,60.1 220.7,76.8 244.7,62.0 262.0,85.4 229.0,105.6 221.3,91.1 185.0,97.5"/>
<path d="M291.1,83.8 C292.6,81.9 297.2,74.9 300.3,72.3 C303.4,69.7 306.9,68.0 309.5,68.0 C312.1,68.0 313.6,69.8 315.6,72.3 C317.6,74.8 319.8,80.7 321.8,83.0 C323.7,85.3 325.3,86.3 327.1,86.4 C328.9,86.5 329.8,85.6 332.5,83.8 C335.2,82.0 339.6,77.5 343.2,75.4 C346.8,73.3 350.6,71.4 353.9,71.1 C357.2,70.8 360.6,71.3 363.1,73.8 C365.7,76.3 368.4,82.3 369.2,86.1 C370.0,89.9 369.5,93.2 367.7,96.8 C365.9,100.4 362.1,104.6 358.5,107.5 C354.9,110.4 349.8,113.0 346.2,114.4 C342.7,115.8 339.5,116.4 337.0,116.0 C334.5,115.6 332.5,114.0 331.0,112.1 C329.5,110.2 329.1,106.9 327.9,104.5 C326.7,102.1 326.1,99.1 324.0,97.6 C321.9,96.1 318.8,95.2 315.6,95.3 C312.4,95.4 309.0,96.4 304.9,98.3 C300.8,100.2 293.4,105.4 291.1,106.8"/>
</g>
<g stroke="#000" stroke-width="1.5" stroke-linejoin="round">
<path d="M124.3,171.5 C125.1,168.7 126.8,163.7 129.9,160.3 C133.0,156.9 139.2,152.8 142.9,151.0 C146.6,149.2 148.9,149.5 152.2,149.2 C155.4,148.9 159.3,150.0 162.4,149.2 C165.5,148.4 166.9,147.6 170.8,144.5 C174.7,141.4 181.3,134.6 185.6,130.6 C189.9,126.6 194.2,122.1 196.8,120.4 C199.4,118.7 200.3,119.3 201.4,120.4 C202.5,121.5 202.8,124.3 203.3,126.9 C203.8,129.5 203.4,133.3 204.2,136.2 C205.0,139.1 205.4,142.3 207.9,144.5 C210.4,146.7 214.8,147.5 219.1,149.2 C223.5,150.9 230.3,152.0 234.0,154.8 C237.7,157.5 240.2,162.2 241.4,165.9 C242.6,169.6 242.6,173.4 241.4,177.1 C240.2,180.8 236.5,186.3 234.0,188.2 C231.5,190.0 230.2,189.4 226.5,188.2 C222.8,187.0 217.2,183.7 211.6,180.8 C206.1,177.9 198.1,172.4 193.1,170.6 C188.1,168.7 186.2,169.1 181.9,169.6 C177.5,170.1 171.9,171.4 167.0,173.3 C162.1,175.2 156.2,178.9 152.2,180.8 C148.2,182.7 146.0,184.4 142.9,184.9 C139.8,185.4 136.6,184.9 133.6,183.6 C130.7,182.3 126.7,179.1 125.2,177.1 C123.6,175.1 123.5,174.3 124.3,171.5Z" fill="#999999"/>
<clipPath id="cA"><rect x="0" y="0" width="350" height="222"/></clipPath>
<clipPath id="cB"><rect x="290" y="222" width="120" height="130"/></clipPath>
<clipPath id="cC"><rect x="350" y="0" width="250" height="222"/></clipPath>
<path d="M252.9,190.0 C252.9,187.7 253.8,184.7 256.8,180.1 C259.8,175.5 265.3,169.0 270.6,162.4 C275.9,155.8 282.8,146.5 288.4,140.7 C294.0,134.9 299.9,130.6 304.2,127.8 C308.5,125.0 311.1,124.4 314.0,123.9 C316.9,123.4 319.3,123.4 321.9,124.9 C324.5,126.4 326.8,129.0 329.8,132.8 C332.8,136.6 337.6,144.6 339.7,147.6 C341.8,150.6 340.6,149.5 342.5,150.6 C344.4,151.7 346.9,154.1 351.3,154.1 C355.7,154.1 363.0,151.6 368.8,150.6 C374.6,149.6 381.0,148.1 386.3,148.0 C391.5,147.9 395.9,148.2 400.3,149.8 C404.7,151.4 408.9,154.4 412.6,157.6 C416.3,160.8 420.2,165.6 422.2,169.0 C424.2,172.4 424.7,175.5 424.8,177.8 C424.9,180.1 424.5,181.8 423.0,183.0 C421.5,184.2 420.7,184.7 416.0,184.8 C411.3,185.0 402.3,183.9 395.0,183.9 C387.7,183.9 377.0,184.1 372.3,184.8 C367.6,185.5 368.0,186.9 367.0,188.3 C366.0,189.8 365.9,191.5 366.2,193.5 C366.5,195.5 367.8,197.7 368.8,200.5 C369.8,203.3 370.7,206.9 372.0,210.1 C373.3,213.4 375.8,216.7 376.8,220.0 C377.8,223.3 378.6,227.0 378.0,230.2 C377.4,233.4 376.0,236.3 373.2,239.3 C370.4,242.3 366.2,245.5 361.2,248.3 C356.2,251.1 349.0,253.9 343.0,256.0 C337.0,258.1 330.2,260.0 325.0,261.0 C319.8,262.0 315.4,262.1 311.8,262.1 C308.2,262.1 305.3,261.8 303.4,260.9 C301.5,260.0 300.8,258.8 300.4,256.7 C300.0,254.6 300.0,252.3 301.0,248.3 C302.0,244.3 304.8,237.2 306.4,232.6 C308.0,228.0 309.9,223.6 310.6,220.6 C311.3,217.6 310.9,216.2 310.5,214.5 C310.1,212.8 309.8,211.7 308.0,210.1 C306.2,208.6 303.6,206.8 299.8,205.2 C296.0,203.6 289.2,201.7 285.0,200.3 C280.8,198.9 279.3,198.0 274.6,196.9 C269.9,195.8 260.4,195.0 256.8,193.9 C253.2,192.7 252.9,192.3 252.9,190.0Z" fill="#000" stroke="none" transform="translate(1.5,9)"/>
<path d="M252.9,190.0 C252.9,187.7 253.8,184.7 256.8,180.1 C259.8,175.5 265.3,169.0 270.6,162.4 C275.9,155.8 282.8,146.5 288.4,140.7 C294.0,134.9 299.9,130.6 304.2,127.8 C308.5,125.0 311.1,124.4 314.0,123.9 C316.9,123.4 319.3,123.4 321.9,124.9 C324.5,126.4 326.8,129.0 329.8,132.8 C332.8,136.6 337.6,144.6 339.7,147.6 C341.8,150.6 340.6,149.5 342.5,150.6 C344.4,151.7 346.9,154.1 351.3,154.1 C355.7,154.1 363.0,151.6 368.8,150.6 C374.6,149.6 381.0,148.1 386.3,148.0 C391.5,147.9 395.9,148.2 400.3,149.8 C404.7,151.4 408.9,154.4 412.6,157.6 C416.3,160.8 420.2,165.6 422.2,169.0 C424.2,172.4 424.7,175.5 424.8,177.8 C424.9,180.1 424.5,181.8 423.0,183.0 C421.5,184.2 420.7,184.7 416.0,184.8 C411.3,185.0 402.3,183.9 395.0,183.9 C387.7,183.9 377.0,184.1 372.3,184.8 C367.6,185.5 368.0,186.9 367.0,188.3 C366.0,189.8 365.9,191.5 366.2,193.5 C366.5,195.5 367.8,197.7 368.8,200.5 C369.8,203.3 370.7,206.9 372.0,210.1 C373.3,213.4 375.8,216.7 376.8,220.0 C377.8,223.3 378.6,227.0 378.0,230.2 C377.4,233.4 376.0,236.3 373.2,239.3 C370.4,242.3 366.2,245.5 361.2,248.3 C356.2,251.1 349.0,253.9 343.0,256.0 C337.0,258.1 330.2,260.0 325.0,261.0 C319.8,262.0 315.4,262.1 311.8,262.1 C308.2,262.1 305.3,261.8 303.4,260.9 C301.5,260.0 300.8,258.8 300.4,256.7 C300.0,254.6 300.0,252.3 301.0,248.3 C302.0,244.3 304.8,237.2 306.4,232.6 C308.0,228.0 309.9,223.6 310.6,220.6 C311.3,217.6 310.9,216.2 310.5,214.5 C310.1,212.8 309.8,211.7 308.0,210.1 C306.2,208.6 303.6,206.8 299.8,205.2 C296.0,203.6 289.2,201.7 285.0,200.3 C280.8,198.9 279.3,198.0 274.6,196.9 C269.9,195.8 260.4,195.0 256.8,193.9 C253.2,192.7 252.9,192.3 252.9,190.0Z" fill="url(#sideA)" clip-path="url(#cA)" transform="translate(1.5,9)"/>
<path d="M252.9,190.0 C252.9,187.7 253.8,184.7 256.8,180.1 C259.8,175.5 265.3,169.0 270.6,162.4 C275.9,155.8 282.8,146.5 288.4,140.7 C294.0,134.9 299.9,130.6 304.2,127.8 C308.5,125.0 311.1,124.4 314.0,123.9 C316.9,123.4 319.3,123.4 321.9,124.9 C324.5,126.4 326.8,129.0 329.8,132.8 C332.8,136.6 337.6,144.6 339.7,147.6 C341.8,150.6 340.6,149.5 342.5,150.6 C344.4,151.7 346.9,154.1 351.3,154.1 C355.7,154.1 363.0,151.6 368.8,150.6 C374.6,149.6 381.0,148.1 386.3,148.0 C391.5,147.9 395.9,148.2 400.3,149.8 C404.7,151.4 408.9,154.4 412.6,157.6 C416.3,160.8 420.2,165.6 422.2,169.0 C424.2,172.4 424.7,175.5 424.8,177.8 C424.9,180.1 424.5,181.8 423.0,183.0 C421.5,184.2 420.7,184.7 416.0,184.8 C411.3,185.0 402.3,183.9 395.0,183.9 C387.7,183.9 377.0,184.1 372.3,184.8 C367.6,185.5 368.0,186.9 367.0,188.3 C366.0,189.8 365.9,191.5 366.2,193.5 C366.5,195.5 367.8,197.7 368.8,200.5 C369.8,203.3 370.7,206.9 372.0,210.1 C373.3,213.4 375.8,216.7 376.8,220.0 C377.8,223.3 378.6,227.0 378.0,230.2 C377.4,233.4 376.0,236.3 373.2,239.3 C370.4,242.3 366.2,245.5 361.2,248.3 C356.2,251.1 349.0,253.9 343.0,256.0 C337.0,258.1 330.2,260.0 325.0,261.0 C319.8,262.0 315.4,262.1 311.8,262.1 C308.2,262.1 305.3,261.8 303.4,260.9 C301.5,260.0 300.8,258.8 300.4,256.7 C300.0,254.6 300.0,252.3 301.0,248.3 C302.0,244.3 304.8,237.2 306.4,232.6 C308.0,228.0 309.9,223.6 310.6,220.6 C311.3,217.6 310.9,216.2 310.5,214.5 C310.1,212.8 309.8,211.7 308.0,210.1 C306.2,208.6 303.6,206.8 299.8,205.2 C296.0,203.6 289.2,201.7 285.0,200.3 C280.8,198.9 279.3,198.0 274.6,196.9 C269.9,195.8 260.4,195.0 256.8,193.9 C253.2,192.7 252.9,192.3 252.9,190.0Z" fill="url(#sideB)" clip-path="url(#cB)" transform="translate(1.5,9)"/>
<path d="M252.9,190.0 C252.9,187.7 253.8,184.7 256.8,180.1 C259.8,175.5 265.3,169.0 270.6,162.4 C275.9,155.8 282.8,146.5 288.4,140.7 C294.0,134.9 299.9,130.6 304.2,127.8 C308.5,125.0 311.1,124.4 314.0,123.9 C316.9,123.4 319.3,123.4 321.9,124.9 C324.5,126.4 326.8,129.0 329.8,132.8 C332.8,136.6 337.6,144.6 339.7,147.6 C341.8,150.6 340.6,149.5 342.5,150.6 C344.4,151.7 346.9,154.1 351.3,154.1 C355.7,154.1 363.0,151.6 368.8,150.6 C374.6,149.6 381.0,148.1 386.3,148.0 C391.5,147.9 395.9,148.2 400.3,149.8 C404.7,151.4 408.9,154.4 412.6,157.6 C416.3,160.8 420.2,165.6 422.2,169.0 C424.2,172.4 424.7,175.5 424.8,177.8 C424.9,180.1 424.5,181.8 423.0,183.0 C421.5,184.2 420.7,184.7 416.0,184.8 C411.3,185.0 402.3,183.9 395.0,183.9 C387.7,183.9 377.0,184.1 372.3,184.8 C367.6,185.5 368.0,186.9 367.0,188.3 C366.0,189.8 365.9,191.5 366.2,193.5 C366.5,195.5 367.8,197.7 368.8,200.5 C369.8,203.3 370.7,206.9 372.0,210.1 C373.3,213.4 375.8,216.7 376.8,220.0 C377.8,223.3 378.6,227.0 378.0,230.2 C377.4,233.4 376.0,236.3 373.2,239.3 C370.4,242.3 366.2,245.5 361.2,248.3 C356.2,251.1 349.0,253.9 343.0,256.0 C337.0,258.1 330.2,260.0 325.0,261.0 C319.8,262.0 315.4,262.1 311.8,262.1 C308.2,262.1 305.3,261.8 303.4,260.9 C301.5,260.0 300.8,258.8 300.4,256.7 C300.0,254.6 300.0,252.3 301.0,248.3 C302.0,244.3 304.8,237.2 306.4,232.6 C308.0,228.0 309.9,223.6 310.6,220.6 C311.3,217.6 310.9,216.2 310.5,214.5 C310.1,212.8 309.8,211.7 308.0,210.1 C306.2,208.6 303.6,206.8 299.8,205.2 C296.0,203.6 289.2,201.7 285.0,200.3 C280.8,198.9 279.3,198.0 274.6,196.9 C269.9,195.8 260.4,195.0 256.8,193.9 C253.2,192.7 252.9,192.3 252.9,190.0Z" fill="url(#sideC)" clip-path="url(#cC)" transform="translate(1.5,9)"/>
<path d="M252.9,190.0 C252.9,187.7 253.8,184.7 256.8,180.1 C259.8,175.5 265.3,169.0 270.6,162.4 C275.9,155.8 282.8,146.5 288.4,140.7 C294.0,134.9 299.9,130.6 304.2,127.8 C308.5,125.0 311.1,124.4 314.0,123.9 C316.9,123.4 319.3,123.4 321.9,124.9 C324.5,126.4 326.8,129.0 329.8,132.8 C332.8,136.6 337.6,144.6 339.7,147.6 C341.8,150.6 340.6,149.5 342.5,150.6 C344.4,151.7 346.9,154.1 351.3,154.1 C355.7,154.1 363.0,151.6 368.8,150.6 C374.6,149.6 381.0,148.1 386.3,148.0 C391.5,147.9 395.9,148.2 400.3,149.8 C404.7,151.4 408.9,154.4 412.6,157.6 C416.3,160.8 420.2,165.6 422.2,169.0 C424.2,172.4 424.7,175.5 424.8,177.8 C424.9,180.1 424.5,181.8 423.0,183.0 C421.5,184.2 420.7,184.7 416.0,184.8 C411.3,185.0 402.3,183.9 395.0,183.9 C387.7,183.9 377.0,184.1 372.3,184.8 C367.6,185.5 368.0,186.9 367.0,188.3 C366.0,189.8 365.9,191.5 366.2,193.5 C366.5,195.5 367.8,197.7 368.8,200.5 C369.8,203.3 370.7,206.9 372.0,210.1 C373.3,213.4 375.8,216.7 376.8,220.0 C377.8,223.3 378.6,227.0 378.0,230.2 C377.4,233.4 376.0,236.3 373.2,239.3 C370.4,242.3 366.2,245.5 361.2,248.3 C356.2,251.1 349.0,253.9 343.0,256.0 C337.0,258.1 330.2,260.0 325.0,261.0 C319.8,262.0 315.4,262.1 311.8,262.1 C308.2,262.1 305.3,261.8 303.4,260.9 C301.5,260.0 300.8,258.8 300.4,256.7 C300.0,254.6 300.0,252.3 301.0,248.3 C302.0,244.3 304.8,237.2 306.4,232.6 C308.0,228.0 309.9,223.6 310.6,220.6 C311.3,217.6 310.9,216.2 310.5,214.5 C310.1,212.8 309.8,211.7 308.0,210.1 C306.2,208.6 303.6,206.8 299.8,205.2 C296.0,203.6 289.2,201.7 285.0,200.3 C280.8,198.9 279.3,198.0 274.6,196.9 C269.9,195.8 260.4,195.0 256.8,193.9 C253.2,192.7 252.9,192.3 252.9,190.0Z" fill="#999999"/>
</g>
<g transform="translate(-205,-73)">
<path d="M781.6,399.4 L779.5,389.3" stroke="#1c1c9c" stroke-width="1.8" stroke-linecap="round"/>
<path d="M781.6,399.4 L784.8,393.2" stroke="#229322" stroke-width="1.4" stroke-linecap="round"/>
<path d="M781.6,399.6 L793.8,400.9" stroke="#b01c1c" stroke-width="1.5" stroke-linecap="round"/>
<path d="M786.2,389.6 L787.9,391.6 L789.6,389.6 M787.9,391.6 L787.9,393.6" stroke="#222" stroke-width="1.1" fill="none"/>
<path d="M795.2,397 L798.8,400.8 M798.8,397 L795.2,400.8" stroke="#222" stroke-width="1.1" fill="none"/>
</g>
</svg>
<div class="a" style="left:0;top:0;width:594px;height:1.5px;background:#222255"></div><div class="a" style="left:0;top:0;width:1px;height:343px;background:rgba(20,20,60,0.45)"></div></div><div class="a" style="left:204px;top:72px;width:595px;height:1px;background:#fbfbfa"></div>


<!-- doc tab -->
<div class="a" style="left:206px;top:416px;width:127px;height:23px;border:1px solid #cfccc7;border-top:none;border-radius:0 0 3px 3px;background:#f7f6f5"></div>
<svg class="a" style="left:209px;top:422px" width="12" height="11"><path d="M1,1 L5.6,1 L5.6,3.5 L3.5,3.5 L3.5,5 L4.8,5 L4.8,6.5 L3.5,6.5 L3.5,9 L1,9Z" fill="#ec3a12"/><path d="M10.90,5.53 L10.90,7.27 L9.61,7.66 L9.74,7.35 L10.38,8.54 L9.14,9.78 L7.95,9.14 L8.26,9.01 L7.87,10.30 L6.13,10.30 L5.74,9.01 L6.05,9.14 L4.86,9.78 L3.62,8.54 L4.26,7.35 L4.39,7.66 L3.10,7.27 L3.10,5.53 L4.39,5.14 L4.26,5.45 L3.62,4.26 L4.86,3.02 L6.05,3.66 L5.74,3.79 L6.13,2.50 L7.87,2.50 L8.26,3.79 L7.95,3.66 L9.14,3.02 L10.38,4.26 L9.74,5.45 L9.61,5.14Z" fill="#0f2f9f"/><circle cx="7" cy="6.4" r="1.1" fill="#fff"/></svg>
<div class="t" style="left:225.5px;top:422px;font-size:9.7px;color:#3c3c3c">F2-T26-ejemplo : 1*</div>
<svg class="a" style="left:316px;top:423px" width="10" height="10"><path d="M1.8,1.8 L8,8 M8,1.8 L1.8,8" stroke="#6a6a6a" stroke-width="2.3" stroke-linecap="round"/></svg>
<!-- status bar -->
<div class="a" style="left:1px;top:438px;width:798px;height:1px;background:#dcdad5"></div>
<div class="t" style="left:5px;top:443px;font-size:9.6px;color:#3c3c3c">Preselected: F2_T26_ejemplo.Extrude003.Edge2 (65.474274,-175.808151,0.000000)</div>
<div class="t" style="left:695.5px;top:443px;font-size:9.9px;color:#3c3c3c">261.11 x 151.60 mm</div>
</body></html>
